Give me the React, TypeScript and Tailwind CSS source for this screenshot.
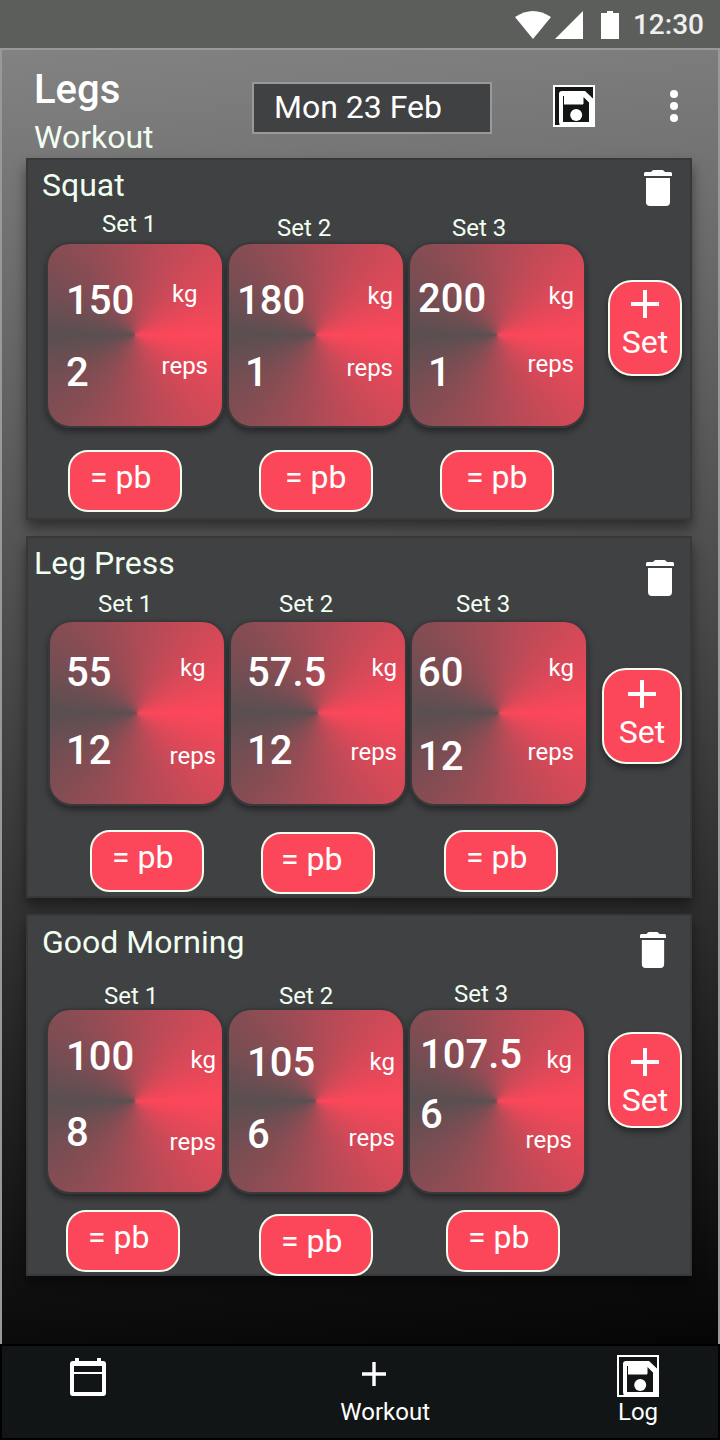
import React from "react";

type SetEntry = {
  weight: string;
  reps: string;
  label: string;
  values: string;
  second?: string;
  units: string;
  pb: string;
};

type Exercise = {
  name: string;
  title: string;
  trash: string;
  trashIcon: string;
  body: string;
  labels: string;
  add: string;
  sets: SetEntry[];
};

const exercises: Exercise[] = [
  {
    name: "Squat",
    title: "pl-3.5 pt-[5px]",
    trash: "mr-2.5 mt-1",
    trashIcon: "w-7",
    body: "pl-4.5",
    labels: "h-[34px]",
    add: "w-[74px] mt-18 pt-1",
    sets: [
      { weight: "150", reps: "2", label: "pl-14 pb-1.5", values: "pl-4.5 gap-8 pt-[37px]", units: "pr-3.5 pt-9.5 gap-12 items-center", pb: "mt-5.5 ml-5.5 pl-5" },
      { weight: "180", reps: "1", label: "pl-12.5 pb-0.5", values: "pl-2 gap-8 pt-[37px]", second: "pl-2", units: "pr-2.5 pt-10 gap-12 items-end", pb: "mt-5.5 ml-8 pl-6" },
      { weight: "200", reps: "1", label: "pl-11 pb-0.5", values: "pl-2 gap-8.5 pt-[35px]", second: "pl-2.5", units: "pr-2.5 pt-10 gap-11 items-end", pb: "mt-5.5 ml-8 pl-6" },
    ],
  },
  {
    name: "Leg Press",
    title: "pl-1.5 pt-[5px]",
    trash: "mr-2 mt-4",
    trashIcon: "w-7",
    body: "pl-5",
    labels: "h-[34px]",
    add: "w-20 mt-20.5 pt-1.5",
    sets: [
      { weight: "55", reps: "12", label: "pl-12.5 pb-1", values: "pl-4 gap-9.5 pt-[31px]", units: "pr-2 pt-8.5 gap-16 items-center", pb: "mt-6 ml-10.5 pl-5" },
      { weight: "57.5", reps: "12", label: "pl-12.5 pb-1", values: "pl-4 gap-9.5 pt-[31px]", units: "pr-2 pt-8.5 gap-15 items-end", pb: "mt-6.5 ml-8 pl-4.5" },
      { weight: "60", reps: "12", label: "pl-11.5 pb-1", values: "pl-1.5 gap-11 pt-[31px]", units: "pr-3 pt-8.5 gap-15 items-end", pb: "mt-6 ml-8.5 pl-5" },
    ],
  },
  {
    name: "Good Morning",
    title: "pl-3.5 pt-1.5",
    trash: "mr-4 mt-2.5",
    trashIcon: "w-[26px]",
    body: "pl-4.5",
    labels: "h-11",
    add: "w-[74px] mt-17 pt-2.5",
    sets: [
      { weight: "100", reps: "8", label: "pl-14.5", values: "pl-4.5 gap-9 pt-[27px]", units: "pr-1.5 pt-9.5 gap-14.5 items-end", pb: "mt-4 ml-5 pl-5" },
      { weight: "105", reps: "6", label: "pl-13", values: "pl-4.5 gap-8 pt-[33px]", units: "pr-2 pt-10 gap-13 items-end", pb: "mt-5 ml-8 pl-5" },
      { weight: "107.5", reps: "6", label: "pl-11.5 pb-0.5", values: "pl-2.5 gap-5 pt-[25px]", units: "pr-3 pt-9.5 gap-14 items-end", pb: "mt-4 ml-9.5 pl-5" },
    ],
  },
];

function SaveIcon() {
  return (
    <svg viewBox="0 0 42 42" className="h-[42px] w-[42px]" aria-hidden="true">
      <rect x="1" y="1" width="40" height="40" fill="#111515" stroke="#fff" strokeWidth="2" />
      <path
        fill="#fff"
        fillRule="evenodd"
        d="M9 6H32L41 14.500V41H8Q6 40 6 37V9Q6 6 9 6ZM10 11V37H36V17.500L30.500 12V19H11V11Z"
      />
      <path fill="#fff" d="M11 8H30V19.500H11Z" />
      <circle cx="23.2" cy="30" r="6" fill="#fff" />
    </svg>
  );
}

function TrashIcon({ className }: { className: string }) {
  return (
    <svg viewBox="0 0 28 36" preserveAspectRatio="none" className={`h-9 ${className}`} fill="#fff" aria-hidden="true">
      <path d="M8 1Q8.500 0 10 0H18Q19.500 0 20 1L21 2H26.500Q28 2 28 3.500V6H0V3.500Q0 2 1.500 2H7Z" />
      <path d="M2 8H26V32Q26 36 22 36H6Q2 36 2 32Z" />
    </svg>
  );
}

function PlusIcon({ className }: { className: string }) {
  return (
    <svg viewBox="0 0 28 28" className={className} fill="#fff" aria-hidden="true">
      <path d="M12 0h4v12h12v4H16v12h-4V16H0v-4h12z" />
    </svg>
  );
}

function SetColumn({ entry, index, exercise }: { entry: SetEntry; index: number; exercise: Exercise }) {
  return (
    <div className="w-[178px]">
      <div className={`flex items-end text-2xl leading-6 text-[#f1fff1] ${exercise.labels} ${entry.label}`}>
        Set {index + 1}
      </div>
      <div className="flex h-[186px] justify-between rounded-3xl border-2 border-[#37393a] bg-[conic-gradient(from_90deg,#fc475a,#5a4f51_50%,#fc475a)] shadow-[0_4px_6px_rgba(0,0,0,0.4)]">
        <div className={`flex flex-col text-[40px] leading-10 font-medium ${entry.values}`}>
          <span>{entry.weight}</span>
          <span className={entry.second}>{entry.reps}</span>
        </div>
        <div className={`flex flex-col text-2xl leading-6 ${entry.units}`}>
          <span>kg</span>
          <span>reps</span>
        </div>
      </div>
      <button
        type="button"
        className={`flex h-[62px] w-[114px] items-start rounded-[20px] border-2 border-[#f1fff1] bg-[#fc475a] pt-[5px] text-[32px] leading-10 ${entry.pb}`}
      >
        = pb
      </button>
    </div>
  );
}

function ExerciseCard({ exercise }: { exercise: Exercise }) {
  return (
    <section className="h-[362px] border-2 border-[#373839] bg-[#404143] shadow-[0_8px_12px_rgba(0,0,0,0.45)]">
      <div className="flex h-12 items-start justify-between">
        <h2 className={`text-[32px] leading-10 text-[#f1fff1] ${exercise.title}`}>{exercise.name}</h2>
        <button type="button" aria-label={`Delete ${exercise.name}`} className={`px-2 py-1.5 ${exercise.trash}`}>
          <TrashIcon className={exercise.trashIcon} />
        </button>
      </div>
      <div className={`flex items-start justify-between pr-2 ${exercise.body}`}>
        <div className="flex gap-[3px]">
          {exercise.sets.map((entry, i) => (
            <SetColumn key={i} entry={entry} index={i} exercise={exercise} />
          ))}
        </div>
        <button
          type="button"
          className={`flex h-24 flex-col items-center rounded-3xl border-2 border-[#f1fff1] bg-[#fc475a] text-[32px] leading-10 shadow-[0_4px_6px_rgba(0,0,0,0.4)] ${exercise.add}`}
        >
          <PlusIcon className="my-1 h-7 w-7" />
          Set
        </button>
      </div>
    </section>
  );
}

export default function App() {
  return (
    <div className="flex min-h-screen flex-col bg-black font-[Roboto,sans-serif] text-white">
      <div className="flex h-12 items-center justify-end bg-[#5c5e5c] pr-4">
        <svg viewBox="0 0 106 28" className="mt-0.5 mr-3 h-7 w-[106px]" fill="#fff" aria-hidden="true">
          <path d="M0 6Q18 -6 36 6L18 28Z" />
          <path d="M40 28L68 0V28Z" />
          <path d="M86 2H92V0H98V2H104V28H86Z" />
        </svg>
        <span className="pt-0.5 text-[28px] leading-8 font-medium text-[#efefef]">12:30</span>
      </div>

      <main className="flex-1 border-x-2 border-t-2 border-[#999] bg-[linear-gradient(175deg,#828282,#050505)]">
        <header className="flex h-[108px] items-start pr-5 pl-8">
          <div className="flex-1 pt-5">
            <h1 className="text-[40px] leading-10 font-medium">Legs</h1>
            <p className="mt-[7px] text-[32px] leading-10 text-[#f1fff1]">Workout</p>
          </div>
          <input
            type="text"
            aria-label="Workout date"
            defaultValue="Mon 23 Feb"
            className="mt-8 h-13 w-60 border-2 border-[#999] bg-[#404143] pb-0.5 pl-5 text-[32px] leading-10"
          />
          <button type="button" aria-label="Save" className="mt-[35px] ml-[61px]">
            <SaveIcon />
          </button>
          <button type="button" aria-label="More options" className="mt-8 ml-[55px]">
            <svg viewBox="0 0 48 48" className="h-12 w-12" fill="#fff" aria-hidden="true">
              <circle cx="24" cy="12" r="4" />
              <circle cx="24" cy="24" r="4" />
              <circle cx="24" cy="36" r="4" />
            </svg>
          </button>
        </header>
        <div className="flex flex-col gap-4 pr-[26px] pb-17 pl-6">
          {exercises.map((exercise) => (
            <ExerciseCard key={exercise.name} exercise={exercise} />
          ))}
        </div>
      </main>

      <nav className="flex h-24 items-start border-2 border-black bg-[#111515] pr-[59px] pl-17 text-2xl leading-7">
        <a href="#calendar" aria-label="Calendar" className="pt-3">
          <svg viewBox="0 0 36 38" className="h-[38px] w-9" fill="#fff" aria-hidden="true">
            <path
              fillRule="evenodd"
              d="M5 0H9V3H27V0H31V3H33Q36 3 36 6V35Q36 38 33 38H3Q0 38 0 35V6Q0 3 3 3H5ZM4 8V14H32V8ZM4 16V34H32V16Z"
            />
          </svg>
        </a>
        <a href="#workout" className="ml-auto pt-4">
          <PlusIcon className="mb-3 ml-5.5 h-6 w-6" />
          Workout
        </a>
        <a href="#log" className="ml-[187px] flex flex-col items-center pt-[9px]">
          <SaveIcon />
          <span className="pt-px">Log</span>
        </a>
      </nav>
    </div>
  );
}
